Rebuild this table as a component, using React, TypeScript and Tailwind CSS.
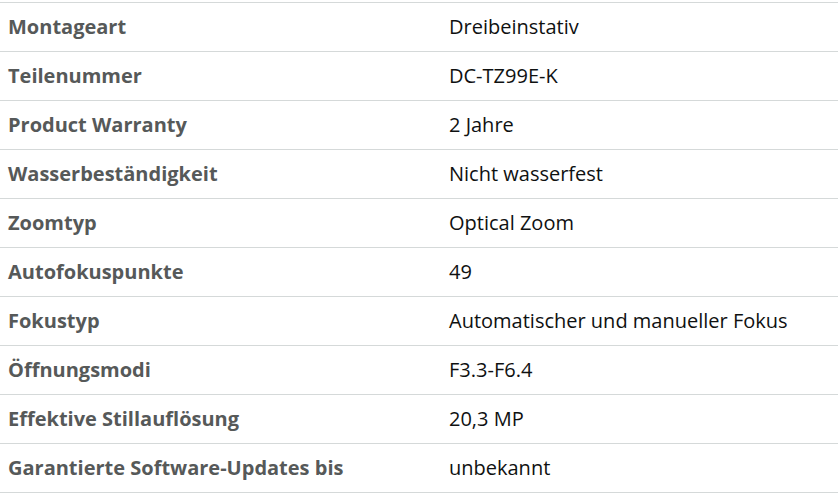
const ROWS = [
  ["Montageart", "Dreibeinstativ"],
  ["Teilenummer", "DC-TZ99E-K"],
  ["Product Warranty", "2 Jahre"],
  ["Wasserbeständigkeit", "Nicht wasserfest"],
  ["Zoomtyp", "Optical Zoom"],
  ["Autofokuspunkte", "49"],
  ["Fokustyp", "Automatischer und manueller Fokus"],
  ["Öffnungsmodi", "F3.3-F6.4"],
  ["Effektive Stillauflösung", "20,3 MP"],
  ["Garantierte Software-Updates bis", "unbekannt"],
];

export default function App() {
  return (
    <div className="w-[838px] h-[498px] bg-white pt-[2px] font-['Open_Sans',sans-serif] text-[20px]">
      <div className="border-t border-[#d5d9d9]">
        {ROWS.map(([label, value]) => (
          <div key={label} className="grid grid-cols-[441px_1fr] h-[49px] border-b border-[#d5d9d9] items-center">
            <div className="pl-2 font-bold text-[#565959]">{label}</div>
            <div className="pl-2 text-[#0f1111]">{value}</div>
          </div>
        ))}
      </div>
    </div>
  );
}
